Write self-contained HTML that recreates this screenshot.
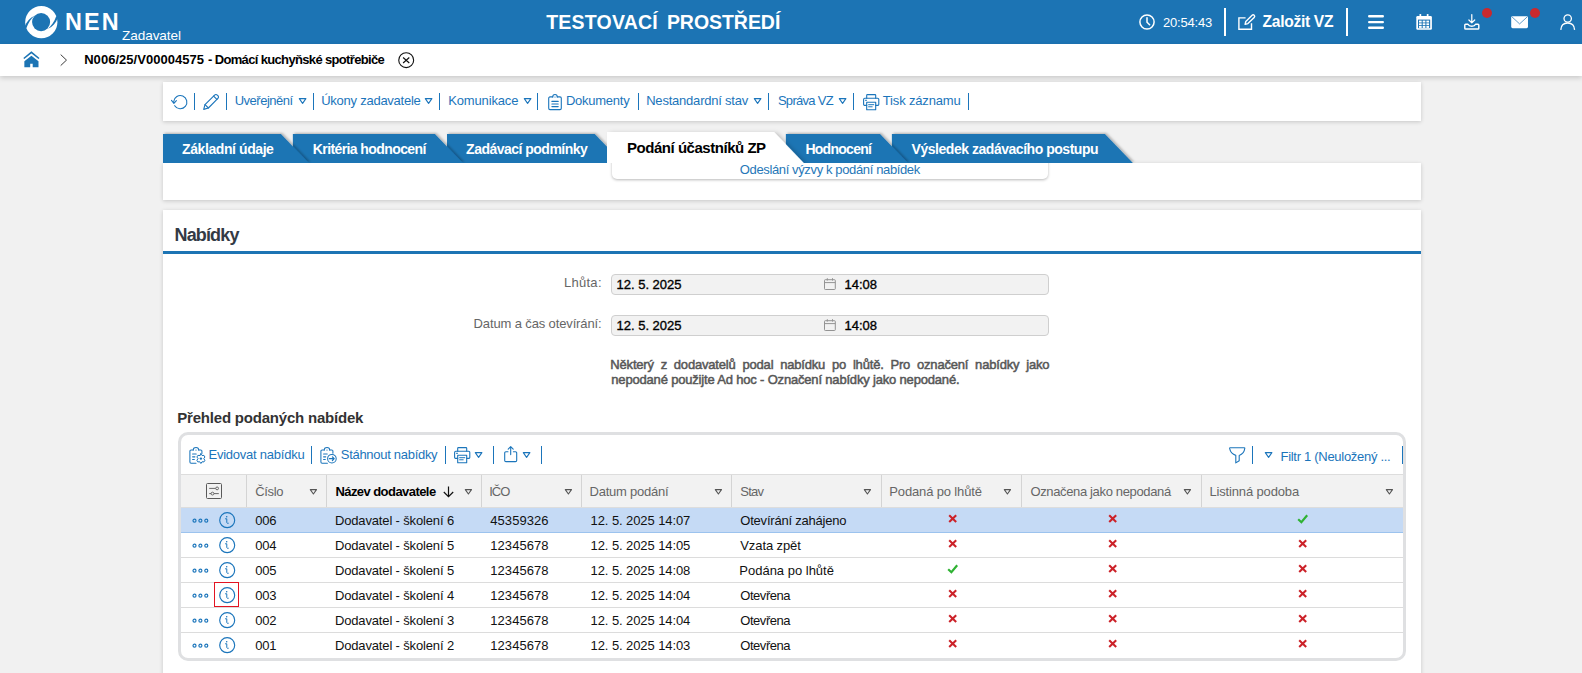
<!DOCTYPE html>
<html lang="cs"><head><meta charset="utf-8"><title>NEN - Nabídky</title>
<style>
*{box-sizing:border-box;margin:0;padding:0}
html,body{width:1582px;height:673px;overflow:hidden}
body{position:relative;background:#f1f1f1;font-family:"Liberation Sans", Arial, sans-serif;font-size:13px}
.t{position:absolute;white-space:pre;line-height:20px;height:20px}
.i{position:absolute;overflow:visible;display:block}
.sep,.csep,.dot,.redbox{position:absolute;display:block}
.top{position:absolute;left:0;top:0;width:1582px;height:44px;background:#1c74b4}
.crumb{position:absolute;left:0;top:44px;width:1582px;height:32px;background:#fff;box-shadow:0 2px 5px rgba(0,0,0,.17)}
.top .t,.top .i,.top .sep,.top .dot{position:absolute}
.crumb .t,.crumb .i{margin-top:-44px}
.dot{width:10.300px;height:10.300px;border-radius:50%;background:#c9292e}
.panel{position:absolute;background:#fff;box-shadow:0 1px 4px rgba(0,0,0,.18)}
.subpanel{position:absolute;background:#fff;border-radius:0 0 5px 5px;box-shadow:0 1px 3px rgba(0,0,0,.28)}
.inp{position:absolute;background:#f2f2f2;border:1px solid #cfcfcf;border-radius:4px}
.grid{position:absolute;border:3px solid #dfe0e2;border-radius:10px;background:#fff}
.hrow{position:absolute;background:#f2f2f2;border-top:1px solid #ddd;border-bottom:1px solid #ddd}
.csep{width:1px;background:#d4d4d4}
.selrow{position:absolute;background:#c5daf5;border-bottom:1px solid #9cc3ee}
.rline{position:absolute;height:1px;background:#dcdcdc}
.redbox{border:1px solid #e31422}
</style></head>
<body>
<header class="top">
<svg class="i" style="left:24.6px;top:5.8px" width="33" height="33" viewBox="0 0 33 33" ><circle cx="16.3" cy="16.2" r="16.1" fill="#fff"/><circle cx="16.1" cy="16.100" r="9.050" fill="#1c74b4"/><path d="M-0.3 20.6C1.700 15.300 5 11.600 9.600 9.700C6.200 12.500 3.500 16.200 1.300 22.300Z" fill="#1c74b4"/><g transform="rotate(180 16.3 16.2)"><path d="M-0.3 20.6C1.700 15.300 5 11.600 9.600 9.700C6.200 12.500 3.500 16.200 1.300 22.300Z" fill="#1c74b4"/></g></svg>
<span class="t logo" style="left:65.10px;top:12.00px;font-size:23.4px;font-weight:700;color:#fff;letter-spacing:2.103px;">NEN</span>
<span class="t" style="left:122.00px;top:26.00px;font-size:13.6px;font-weight:400;color:#fff;letter-spacing:-0.085px;">Zadavatel</span>
<span class="t" style="left:546.20px;top:12.00px;font-size:19.5px;font-weight:700;color:#fff;letter-spacing:0.216px;">TESTOVACÍ</span>
<span class="t" style="left:666.90px;top:12.00px;font-size:19.5px;font-weight:700;color:#fff;letter-spacing:-0.043px;">PROSTŘEDÍ</span>
<svg class="i" style="left:1138.6px;top:13.9px" width="16" height="16" viewBox="0 0 16 16" ><circle cx="8" cy="8" r="7.100" fill="none" stroke="#fff" stroke-width="1.500"/><path d="M8 3.800V8.200l2.600 2.600" fill="none" stroke="#fff" stroke-width="1.500" stroke-linecap="round"/></svg>
<span class="t" style="left:1162.90px;top:13.00px;font-size:13px;font-weight:400;color:#fff;letter-spacing:-0.168px;">20:54:43</span>
<i class="sep" style="left:1224.00px;top:8px;height:28.4px;width:2px;background:#fff"></i>
<svg class="i" style="left:1238px;top:13.8px" width="17" height="16.5" viewBox="0 0 17 16.5" ><g fill="none" stroke="#fff" stroke-width="1.400" stroke-linejoin="miter" stroke-linecap="butt"><path d="M7.600 3.900H0.900V15.200H13.500V9.200"/><path d="M7.100 10.400l0.700-2.900 6.300-6.200a1.450 1.450 0 0 1 2.100 2.100L9.900 9.600z" stroke-linejoin="round"/></g></svg>
<span class="t" style="left:1262.60px;top:12.00px;font-size:15.6px;font-weight:700;color:#fff;letter-spacing:-0.312px;">Založit VZ</span>
<i class="sep" style="left:1346.00px;top:8px;height:28.4px;width:2px;background:#fff"></i>
<svg class="i" style="left:1368px;top:14px" width="16" height="16" viewBox="0 0 16 16" ><path d="M1.200 2.200h13.600M1.200 8.100h13.600M1.200 13.800h13.600" stroke="#fff" stroke-width="2.400" stroke-linecap="round"/></svg>
<svg class="i" style="left:1415.8px;top:14px" width="16.2" height="16" viewBox="0 0 16.2 16" ><rect x="0.300" y="2" width="15.600" height="13.800" rx="1.200" fill="#fff"/><rect x="3.500" y="0" width="1.700" height="3.600" rx="0.500" fill="#fff"/><rect x="10.800" y="0" width="1.700" height="3.600" rx="0.500" fill="#fff"/><rect x="2" y="5.600" width="12.200" height="8.600" fill="#1c74b4"/><g fill="#fff"><rect x="3" y="6.600" width="2.700" height="1.900"/><rect x="6.700" y="6.600" width="2.700" height="1.900"/><rect x="10.400" y="6.600" width="2.700" height="1.900"/><rect x="3" y="9.300" width="2.700" height="1.900"/><rect x="6.700" y="9.300" width="2.700" height="1.900"/><rect x="10.400" y="9.300" width="2.700" height="1.900"/><rect x="3" y="12" width="2.700" height="1.900"/><rect x="6.700" y="12" width="2.700" height="1.900"/><rect x="10.400" y="12" width="2.700" height="1.900"/></g></svg>
<svg class="i" style="left:1464px;top:14px" width="15.6" height="16" viewBox="0 0 15.6 16" ><g fill="none" stroke="#fff" stroke-linejoin="round" stroke-linecap="round"><path d="M7.800 0.600v8.200M4.900 6l2.900 2.900L10.700 6" stroke-width="1.250"/><path d="M4 10.200H1.600a0.800 0.800 0 0 0-0.800 0.800v3.300a0.800 0.800 0 0 0 0.800 0.800h12.400a0.800 0.800 0 0 0 0.800-0.800V11a0.800 0.800 0 0 0-0.800-0.800H11.600c-0.600 1.300-1.900 2-3.800 2s-3.200-0.700-3.800-2z" stroke-width="1.450"/></g></svg>
<i class="dot" style="left:1481.9px;top:7.900px"></i>
<svg class="i" style="left:1511px;top:15.8px" width="17.2" height="12.4" viewBox="0 0 17.2 12.4" ><rect x="0.200" y="0.200" width="16.800" height="12" rx="1.400" fill="#fff"/><path d="M1 0.900l7.600 7L16.200 0.900" fill="none" stroke="#1c74b4" stroke-width="0.700"/></svg>
<i class="dot" style="left:1529.8px;top:7.900px"></i>
<svg class="i" style="left:1560px;top:13.9px" width="15.4" height="16.2" viewBox="0 0 15.4 16.2" ><g fill="none" stroke="#fff" stroke-width="1.300"><circle cx="7.700" cy="4.500" r="3.700"/><path d="M0.800 15.900c0.200-4.600 2.900-6.900 6.900-6.900s6.700 2.300 6.900 6.900"/></g></svg>
</header>
<nav class="crumb">
<svg class="i" style="left:22.7px;top:52.4px" width="16.8" height="15.6" viewBox="0 0 16.8 15.6" ><path d="M0.800 6.500L8.400 0.300L16 6.500" fill="none" stroke="#1c74b4" stroke-width="1.600"/><path d="M8.400 3.700L1.350 9.300V15.200H7.200V11.800H9.700V15.200H15.500V9.300z" fill="#1c74b4"/></svg>
<svg class="i" style="left:60.4px;top:54.3px" width="7.4" height="12.2" viewBox="0 0 7.4 12.2" ><path d="M0.700 0.600l5.800 5.500L0.700 11.600" fill="none" stroke="#3a3a3a" stroke-width="1"/></svg>
<span class="t" style="left:84.20px;top:50.00px;font-size:13px;font-weight:700;color:#000;letter-spacing:0.035px;">N006/25/V00004575</span>
<span class="t" style="left:208.00px;top:50.00px;font-size:13px;font-weight:700;color:#000;letter-spacing:-0.651px;">- Domácí kuchyňské spotřebiče</span>
<svg class="i" style="left:397.6px;top:51.8px" width="16.4" height="16.4" viewBox="0 0 16.4 16.4" ><circle cx="8.200" cy="8.200" r="7.450" fill="none" stroke="#111" stroke-width="1.100"/><path d="M5.100 5.500l6.200 5.500M11.300 5.500l-6.200 5.500" stroke="#111" stroke-width="1.150" fill="none"/></svg>
</nav>
<main>
<div class="actions" role="toolbar">
<div class="panel toolbar" style="left:163px;top:82px;width:1258px;height:39px"></div>
<svg class="i" style="left:170.6px;top:94.2px" width="17" height="16" viewBox="0 0 17 16" ><path d="M3.7 11.7A6.6 6.6 0 1 0 2.7 7.6" fill="none" stroke="#1b75bb" stroke-width="1.1" stroke-linecap="round"/><path d="M0.5 6.4L2.9 9.3L5.4 6.600" fill="none" stroke="#1b75bb" stroke-width="1.1" stroke-linecap="round" stroke-linejoin="round"/></svg>
<i class="sep" style="left:193.75px;top:93px;height:17.0px;width:1.3px;background:#1b75bb"></i>
<svg class="i" style="left:203px;top:93.5px" width="16.5" height="16.5" viewBox="0 0 16.5 16.5" ><g fill="none" stroke="#1b75bb" stroke-width="1.1" stroke-linejoin="round" stroke-linecap="round"><path d="M0.7 15.4L2 10.6L11.6 1.1a1.9 1.9 0 0 1 2.7 0l0.6 0.6a1.9 1.9 0 0 1 0 2.7L5.4 14z"/><path d="M2 10.6L5.4 14M10.6 2.1L13.9 5.4"/></g></svg>
<i class="sep" style="left:225.75px;top:93px;height:17.0px;width:1.3px;background:#1b75bb"></i>
<span class="t" style="left:234.70px;top:91.00px;font-size:13px;font-weight:400;color:#1b75bb;letter-spacing:-0.495px;">Uveřejnění</span>
<svg class="i" style="left:298px;top:97px" width="9.2" height="7.8" viewBox="0 0 9.2 7.8" ><path d="M1.3 1.6H7.9L4.6 6.3999999999999995Z" fill="none" stroke="#1b75bb" stroke-width="1.1" stroke-linejoin="round"/></svg>
<i class="sep" style="left:312.75px;top:93px;height:17.0px;width:1.3px;background:#1b75bb"></i>
<span class="t" style="left:321.20px;top:91.00px;font-size:13px;font-weight:400;color:#1b75bb;letter-spacing:-0.247px;">Úkony zadavatele</span>
<svg class="i" style="left:424.4px;top:97px" width="9.2" height="7.8" viewBox="0 0 9.2 7.8" ><path d="M1.3 1.6H7.9L4.6 6.3999999999999995Z" fill="none" stroke="#1b75bb" stroke-width="1.1" stroke-linejoin="round"/></svg>
<i class="sep" style="left:438.95px;top:93px;height:17.0px;width:1.3px;background:#1b75bb"></i>
<span class="t" style="left:448.20px;top:91.00px;font-size:13px;font-weight:400;color:#1b75bb;letter-spacing:-0.145px;">Komunikace</span>
<svg class="i" style="left:522.6px;top:97px" width="9.2" height="7.8" viewBox="0 0 9.2 7.8" ><path d="M1.3 1.6H7.9L4.6 6.3999999999999995Z" fill="none" stroke="#1b75bb" stroke-width="1.1" stroke-linejoin="round"/></svg>
<i class="sep" style="left:536.75px;top:93px;height:17.0px;width:1.3px;background:#1b75bb"></i>
<svg class="i" style="left:547.6px;top:93.6px" width="14" height="16.4" viewBox="0 0 14 16.4" ><g fill="none" stroke="#1b75bb" stroke-width="1.1" stroke-linejoin="round" stroke-linecap="round"><path d="M4.700 2.900H2a1.300 1.300 0 0 0-1.300 1.300v10.100A1.300 1.300 0 0 0 2 15.600h10a1.300 1.300 0 0 0 1.300-1.300V4.200A1.300 1.300 0 0 0 12 2.900H9.300"/><path d="M4.700 2.900C4.700 1.300 5.600 0.500 7 0.500s2.300 0.800 2.300 2.400"/><path d="M3.900 7.4h6.300M3.900 10h6.300M3.900 12.6h6.300" stroke-width="1.150"/></g><circle cx="7" cy="3" r="0.6" fill="#1b75bb"/></svg>
<span class="t" style="left:565.90px;top:91.00px;font-size:13px;font-weight:400;color:#1b75bb;letter-spacing:-0.244px;">Dokumenty</span>
<i class="sep" style="left:637.95px;top:93px;height:17.0px;width:1.3px;background:#1b75bb"></i>
<span class="t" style="left:646.20px;top:91.00px;font-size:13px;font-weight:400;color:#1b75bb;letter-spacing:-0.213px;">Nestandardní stav</span>
<svg class="i" style="left:753.2px;top:97px" width="9.2" height="7.8" viewBox="0 0 9.2 7.8" ><path d="M1.3 1.6H7.9L4.6 6.3999999999999995Z" fill="none" stroke="#1b75bb" stroke-width="1.1" stroke-linejoin="round"/></svg>
<i class="sep" style="left:767.95px;top:93px;height:17.0px;width:1.3px;background:#1b75bb"></i>
<span class="t" style="left:777.90px;top:91.00px;font-size:13px;font-weight:400;color:#1b75bb;letter-spacing:-0.697px;">Správa VZ</span>
<svg class="i" style="left:838.1px;top:97px" width="9.2" height="7.8" viewBox="0 0 9.2 7.8" ><path d="M1.3 1.6H7.9L4.6 6.3999999999999995Z" fill="none" stroke="#1b75bb" stroke-width="1.1" stroke-linejoin="round"/></svg>
<i class="sep" style="left:852.75px;top:93px;height:17.0px;width:1.3px;background:#1b75bb"></i>
<svg class="i" style="left:862.5px;top:93.7px" width="16.4" height="16.4" viewBox="0 0 16.4 16.4" ><g fill="none" stroke="#1b75bb" stroke-width="1.1" stroke-linejoin="round" stroke-linecap="round"><path d="M3.7 4.2V1.3a0.7 0.7 0 0 1 0.7-0.7h7.6a0.7 0.7 0 0 1 0.7 0.7v2.9"/><path d="M3.7 11.4H1.8a1.2 1.2 0 0 1-1.2-1.2V5.4a1.2 1.2 0 0 1 1.2-1.2h12.8a1.2 1.2 0 0 1 1.2 1.2v4.8a1.2 1.2 0 0 1-1.2 1.2h-1.9"/><path d="M3.7 8.3h9v7.4h-9z"/><path d="M5.6 10.7h5.2M5.6 12.8h3.6" stroke-width="1"/><path d="M2.5 6.3h1" /></g></svg>
<span class="t" style="left:882.80px;top:91.00px;font-size:13px;font-weight:400;color:#1b75bb;letter-spacing:-0.162px;">Tisk záznamu</span>
<i class="sep" style="left:967.95px;top:93px;height:17.0px;width:1.3px;background:#1b75bb"></i>
</div>
<div class="tabs" role="tablist">
<div class="panel" style="left:163px;top:163px;width:1258px;height:37px"></div>
<div class="subpanel" style="left:611.5px;top:150px;width:436.6px;height:29px"></div>
<span class="t" style="left:739.80px;top:160.00px;font-size:13px;font-weight:400;color:#2677b8;letter-spacing:-0.370px;">Odeslání výzvy k podání nabídek</span>
<svg class="i" style="left:0;top:120px" width="1582" height="50" viewBox="0 120 1582 50"><defs><filter id="ts" x="-5%" y="-30%" width="110%" height="160%"><feDropShadow dx="1.500" dy="-1" stdDeviation="1.300" flood-color="#000" flood-opacity="0.260"/></filter><filter id="ta" x="-5%" y="-30%" width="110%" height="160%"><feDropShadow dx="3" dy="1" stdDeviation="2" flood-color="#000" flood-opacity="0.220"/></filter><clipPath id="tc"><rect x="0" y="120" width="1582" height="43"/></clipPath></defs><g clip-path="url(#tc)"><polygon points="891.9,163 891.9,134 1104.9,134 1132.9,163" fill="#1c74b4" filter="url(#ts)"/><polygon points="785.9,163 785.9,134 880.0,134 908.0,163" fill="#1c74b4" filter="url(#ts)"/><polygon points="447,163 447,134 594.7,134 622.7,163" fill="#1c74b4" filter="url(#ts)"/><polygon points="292.9,163 292.9,134 434.9,134 462.9,163" fill="#1c74b4" filter="url(#ts)"/><polygon points="163,163 163,134 280.9,134 308.9,163" fill="#1c74b4" filter="url(#ts)"/><polygon points="607,163 607,132 774.05,132 803.8499999999999,163" fill="#fff" filter="url(#ta)"/></g></svg>
<span class="t" style="left:182.10px;top:139.00px;font-size:14px;font-weight:700;color:#fff;letter-spacing:-0.420px;">Základní údaje</span>
<span class="t" style="left:312.80px;top:139.00px;font-size:14px;font-weight:700;color:#fff;letter-spacing:-0.594px;">Kritéria hodnocení</span>
<span class="t" style="left:466.10px;top:139.00px;font-size:14px;font-weight:700;color:#fff;letter-spacing:-0.515px;">Zadávací podmínky</span>
<span class="t" style="left:805.40px;top:139.00px;font-size:14px;font-weight:700;color:#fff;letter-spacing:-0.718px;">Hodnocení</span>
<span class="t" style="left:911.60px;top:139.00px;font-size:14px;font-weight:700;color:#fff;letter-spacing:-0.470px;">Výsledek zadávacího postupu</span>
<span class="t" style="left:627.00px;top:138.00px;font-size:15px;font-weight:700;color:#000;letter-spacing:-0.468px;">Podání účastníků ZP</span>
</div>
<div class="offers">
<section class="panel" style="left:163px;top:210px;width:1258px;height:480px"></section>
<span class="t" style="left:174.50px;top:225.00px;font-size:18px;font-weight:700;color:#333a45;letter-spacing:-0.852px;">Nabídky</span>
<div style="position:absolute;left:163px;top:251px;width:1258px;height:3px;background:#1c74b4"></div>
<span class="t" style="left:563.90px;top:273.00px;font-size:13px;font-weight:400;color:#666;letter-spacing:0.294px;">Lhůta:</span>
<div class="inp" style="left:611px;top:274px;width:438px;height:21px"></div>
<span class="t" style="left:616.50px;top:275.00px;font-size:13px;font-weight:500;color:#000;-webkit-text-stroke:0.35px currentColor;letter-spacing:-0.003px;">12. 5. 2025</span>
<svg class="i" style="left:823.7px;top:278.2px" width="12" height="12" viewBox="0 0 12 12" ><g fill="none" stroke="#939393" stroke-width="1"><rect x="0.500" y="1.700" width="10.800" height="9.800" rx="0.800"/><path d="M0.500 4.600h10.800M3.300 0.200v2.400M8.500 0.200v2.400"/></g></svg>
<span class="t" style="left:844.60px;top:275.00px;font-size:13px;font-weight:500;color:#000;-webkit-text-stroke:0.35px currentColor;letter-spacing:-0.050px;">14:08</span>
<span class="t" style="left:473.60px;top:314.00px;font-size:13px;font-weight:400;color:#666;letter-spacing:-0.132px;">Datum a čas otevírání:</span>
<div class="inp" style="left:611px;top:315px;width:438px;height:21px"></div>
<span class="t" style="left:616.50px;top:316.00px;font-size:13px;font-weight:500;color:#000;-webkit-text-stroke:0.35px currentColor;letter-spacing:-0.003px;">12. 5. 2025</span>
<svg class="i" style="left:823.7px;top:319.2px" width="12" height="12" viewBox="0 0 12 12" ><g fill="none" stroke="#939393" stroke-width="1"><rect x="0.500" y="1.700" width="10.800" height="9.800" rx="0.800"/><path d="M0.500 4.600h10.800M3.300 0.200v2.400M8.500 0.200v2.400"/></g></svg>
<span class="t" style="left:844.60px;top:316.00px;font-size:13px;font-weight:500;color:#000;-webkit-text-stroke:0.35px currentColor;letter-spacing:-0.050px;">14:08</span>
<span class="t" style="left:610.30px;top:355.00px;font-size:13px;font-weight:500;color:#575757;-webkit-text-stroke:0.5px currentColor;letter-spacing:-0.179px;word-spacing:3.385px;">Některý z dodavatelů podal nabídku po lhůtě. Pro označení nabídky jako</span>
<span class="t note2" style="left:611.30px;top:370.00px;font-size:13px;font-weight:500;color:#575757;-webkit-text-stroke:0.5px currentColor;letter-spacing:-0.179px;">nepodané použijte Ad hoc - Označení nabídky jako nepodané.</span>
<span class="t" style="left:177.30px;top:408.00px;font-size:15px;font-weight:700;color:#333;letter-spacing:-0.206px;">Přehled podaných nabídek</span>
<div class="offers-grid" role="table">
<div class="grid" style="left:178px;top:432px;width:1228px;height:229px"></div>
<svg class="i" style="left:188.5px;top:446.5px" width="17" height="17" viewBox="0 0 17 17" ><g fill="none" stroke="#1b75bb" stroke-width="1.05" stroke-linejoin="round" stroke-linecap="round"><path d="M4.300 2.900H2.100a1.200 1.200 0 0 0-1.200 1.200V15a1.200 1.200 0 0 0 1.200 1.200H7"/><path d="M9.700 2.900h2a1.200 1.200 0 0 1 1.200 1.200v2.300"/><path d="M4.300 2.900C4.300 1.200 5.400 0.400 7 0.400s2.700 0.800 2.700 2.500"/><path d="M3.600 7h3.600M3.600 9.800h2.300M3.600 12.500h1.700" stroke-width="1.150"/><path d="M11.900 6.800l1.100 1.700 2-0.100 0.900 1.600-1.100 1.600 1.100 1.700-0.900 1.600-2-0.100-1.100 1.700-1.100-1.700-2 0.100-0.900-1.600 1.100-1.700-1.100-1.600 0.900-1.600 2 0.100z" stroke-width="1"/></g><circle cx="11.900" cy="11.600" r="1.200" fill="#1b75bb"/><circle cx="7" cy="3.100" r="0.600" fill="#1b75bb"/></svg>
<span class="t" style="left:208.50px;top:445.00px;font-size:13px;font-weight:400;color:#1b75bb;letter-spacing:-0.234px;">Evidovat nabídku</span>
<i class="sep" style="left:310.85px;top:446px;height:18.0px;width:1.3px;background:#1b75bb"></i>
<svg class="i" style="left:320.4px;top:446.5px" width="17" height="17" viewBox="0 0 17 17" ><g fill="none" stroke="#1b75bb" stroke-width="1.05" stroke-linejoin="round" stroke-linecap="round"><path d="M4.300 2.900H2.100a1.200 1.200 0 0 0-1.200 1.200V15a1.200 1.200 0 0 0 1.200 1.200H7.400"/><path d="M9.700 2.900h2a1.200 1.200 0 0 1 1.200 1.200v2.200"/><path d="M4.300 2.900C4.300 1.200 5.400 0.400 7 0.400s2.700 0.800 2.700 2.500"/><path d="M3.600 7h3.600M3.600 9.800h2.100M3.600 12.500h1.700" stroke-width="1.150"/><circle cx="11.900" cy="11.700" r="4.300"/><path d="M9.400 11.700h4.600M12.400 9.900l1.800 1.800-1.800 1.800" stroke-width="1.200"/></g><circle cx="7" cy="3.100" r="0.600" fill="#1b75bb"/></svg>
<span class="t" style="left:340.80px;top:445.00px;font-size:13px;font-weight:400;color:#1b75bb;letter-spacing:-0.293px;">Stáhnout nabídky</span>
<i class="sep" style="left:444.95px;top:446px;height:18.0px;width:1.3px;background:#1b75bb"></i>
<svg class="i" style="left:454.1px;top:446.7px" width="16.4" height="16.4" viewBox="0 0 16.4 16.4" ><g fill="none" stroke="#1b75bb" stroke-width="1.1" stroke-linejoin="round" stroke-linecap="round"><path d="M3.7 4.2V1.3a0.7 0.7 0 0 1 0.7-0.7h7.6a0.7 0.7 0 0 1 0.7 0.7v2.9"/><path d="M3.7 11.4H1.8a1.2 1.2 0 0 1-1.2-1.2V5.4a1.2 1.2 0 0 1 1.2-1.2h12.8a1.2 1.2 0 0 1 1.2 1.2v4.8a1.2 1.2 0 0 1-1.2 1.2h-1.9"/><path d="M3.7 8.3h9v7.4h-9z"/><path d="M5.6 10.7h5.2M5.6 12.8h3.6" stroke-width="1"/><path d="M2.5 6.3h1" /></g></svg>
<svg class="i" style="left:473.6px;top:451.3px" width="9.2" height="7.8" viewBox="0 0 9.2 7.8" ><path d="M1.3 1.6H7.9L4.6 6.3999999999999995Z" fill="none" stroke="#1b75bb" stroke-width="1.1" stroke-linejoin="round"/></svg>
<i class="sep" style="left:492.85px;top:446px;height:18.0px;width:1.3px;background:#1b75bb"></i>
<svg class="i" style="left:503.8px;top:446.4px" width="13.4" height="16.4" viewBox="0 0 13.4 16.4" ><g fill="none" stroke="#1b75bb" stroke-width="1.1" stroke-linejoin="round" stroke-linecap="round"><path d="M4 5.8H1.9a1.2 1.2 0 0 0-1.2 1.2v7.4a1.2 1.2 0 0 0 1.2 1.2h9.6a1.2 1.2 0 0 0 1.2-1.2V7a1.2 1.2 0 0 0-1.2-1.2H9.4"/><path d="M6.7 8.6V0.8M4.2 3.2L6.7 0.7L9.2 3.2"/></g></svg>
<svg class="i" style="left:521.6px;top:451.3px" width="9.2" height="7.8" viewBox="0 0 9.2 7.8" ><path d="M1.3 1.6H7.9L4.6 6.3999999999999995Z" fill="none" stroke="#1b75bb" stroke-width="1.1" stroke-linejoin="round"/></svg>
<i class="sep" style="left:540.95px;top:446px;height:18.0px;width:1.3px;background:#1b75bb"></i>
<svg class="i" style="left:1228.8px;top:446.6px" width="16.5" height="16.6" viewBox="0 0 16.5 16.6" ><path d="M1.2 0.7h14a0.6 0.6 0 0 1 0.6 0.7c-0.5 3.6-2.6 6-5.6 7v5.3l-3.4 2.2V8.4C3.600 7.400 1.300 5 0.600 1.400a0.600 0.600 0 0 1 0.600-0.700z" fill="none" stroke="#1b75bb" stroke-width="1.1" stroke-linejoin="round"/></svg>
<i class="sep" style="left:1251.85px;top:446px;height:18.0px;width:1.3px;background:#1b75bb"></i>
<svg class="i" style="left:1264.4px;top:451.2px" width="9.2" height="7.8" viewBox="0 0 9.2 7.8" ><path d="M1.3 1.6H7.9L4.6 6.3999999999999995Z" fill="none" stroke="#1b75bb" stroke-width="1.1" stroke-linejoin="round"/></svg>
<span class="t" style="left:1280.50px;top:447.00px;font-size:13px;font-weight:400;color:#1b75bb;letter-spacing:-0.291px;">Filtr 1 (Neuložený ...</span>
<i class="sep" style="left:1401.75px;top:446px;height:18.0px;width:1.3px;background:#1b75bb"></i>
<div class="hrow" style="left:181px;top:474px;width:1222px;height:34px"></div>
<i class="csep" style="left:246px;top:475px;height:32px"></i>
<i class="csep" style="left:326px;top:475px;height:32px"></i>
<i class="csep" style="left:481px;top:475px;height:32px"></i>
<i class="csep" style="left:581px;top:475px;height:32px"></i>
<i class="csep" style="left:731px;top:475px;height:32px"></i>
<i class="csep" style="left:881px;top:475px;height:32px"></i>
<i class="csep" style="left:1021px;top:475px;height:32px"></i>
<i class="csep" style="left:1201px;top:475px;height:32px"></i>
<svg class="i" style="left:206px;top:483px" width="16" height="16" viewBox="0 0 16 16" ><g fill="none" stroke="#5a5a5a" stroke-width="1"><rect x="0.5" y="0.5" width="15" height="15" rx="1"/><path d="M3.2 5.4h6.6M3.2 10.600h1.900M8 10.600h4.800" stroke-width="0.9"/><circle cx="11.100" cy="5.400" r="1.400" fill="#f2f2f2" stroke-width="0.9"/><circle cx="6.500" cy="10.600" r="1.400" fill="#f2f2f2" stroke-width="0.9"/></g></svg>
<span class="t" style="left:255.30px;top:482.00px;font-size:13px;font-weight:400;color:#666;letter-spacing:-0.372px;">Číslo</span>
<svg class="i" style="left:308.8px;top:487.7px" width="8.8" height="7.4" viewBox="0 0 8.8 7.4" ><path d="M1.3 1.6H7.5L4.4 6.0Z" fill="none" stroke="#555" stroke-width="1.1" stroke-linejoin="round"/></svg>
<span class="t" style="left:335.40px;top:482.00px;font-size:13px;font-weight:700;color:#000;letter-spacing:-0.558px;">Název dodavatele</span>
<svg class="i" style="left:463.6px;top:487.7px" width="8.8" height="7.4" viewBox="0 0 8.8 7.4" ><path d="M1.3 1.6H7.5L4.4 6.0Z" fill="none" stroke="#555" stroke-width="1.1" stroke-linejoin="round"/></svg>
<span class="t" style="left:489.30px;top:482.00px;font-size:13px;font-weight:400;color:#666;letter-spacing:-1.050px;">IČO</span>
<svg class="i" style="left:563.6px;top:487.7px" width="8.8" height="7.4" viewBox="0 0 8.8 7.4" ><path d="M1.3 1.6H7.5L4.4 6.0Z" fill="none" stroke="#555" stroke-width="1.1" stroke-linejoin="round"/></svg>
<span class="t" style="left:589.60px;top:482.00px;font-size:13px;font-weight:400;color:#666;letter-spacing:-0.241px;">Datum podání</span>
<svg class="i" style="left:713.8px;top:487.7px" width="8.8" height="7.4" viewBox="0 0 8.8 7.4" ><path d="M1.3 1.6H7.5L4.4 6.0Z" fill="none" stroke="#555" stroke-width="1.1" stroke-linejoin="round"/></svg>
<span class="t" style="left:740.30px;top:482.00px;font-size:13px;font-weight:400;color:#666;letter-spacing:-0.738px;">Stav</span>
<svg class="i" style="left:863.3px;top:487.7px" width="8.8" height="7.4" viewBox="0 0 8.8 7.4" ><path d="M1.3 1.6H7.5L4.4 6.0Z" fill="none" stroke="#555" stroke-width="1.1" stroke-linejoin="round"/></svg>
<span class="t" style="left:889.30px;top:482.00px;font-size:13px;font-weight:400;color:#666;letter-spacing:-0.147px;">Podaná po lhůtě</span>
<svg class="i" style="left:1003.4px;top:487.7px" width="8.8" height="7.4" viewBox="0 0 8.8 7.4" ><path d="M1.3 1.6H7.5L4.4 6.0Z" fill="none" stroke="#555" stroke-width="1.1" stroke-linejoin="round"/></svg>
<span class="t" style="left:1030.40px;top:482.00px;font-size:13px;font-weight:400;color:#666;letter-spacing:-0.354px;">Označena jako nepodaná</span>
<svg class="i" style="left:1183.4px;top:487.7px" width="8.8" height="7.4" viewBox="0 0 8.8 7.4" ><path d="M1.3 1.6H7.5L4.4 6.0Z" fill="none" stroke="#555" stroke-width="1.1" stroke-linejoin="round"/></svg>
<span class="t" style="left:1209.40px;top:482.00px;font-size:13px;font-weight:400;color:#666;letter-spacing:-0.148px;">Listinná podoba</span>
<svg class="i" style="left:1384.7px;top:487.7px" width="8.8" height="7.4" viewBox="0 0 8.8 7.4" ><path d="M1.3 1.6H7.5L4.4 6.0Z" fill="none" stroke="#555" stroke-width="1.1" stroke-linejoin="round"/></svg>
<svg class="i" style="left:443px;top:485.6px" width="11" height="11.6" viewBox="0 0 11 11.6" ><path d="M5.5 0.500v10M0.800 6l4.700 4.700L10.200 6" fill="none" stroke="#111" stroke-width="1.2"/></svg>
<div class="selrow" style="left:181px;top:508px;width:1222px;height:25px"></div>
<svg class="i" style="left:192.0px;top:517.5px" width="16.8" height="5.4" viewBox="0 0 16.8 5.4" ><g fill="none" stroke="#1b75bb" stroke-width="1.2"><circle cx="2.5" cy="2.7" r="1.5"/><circle cx="8.4" cy="2.7" r="1.5"/><circle cx="14.3" cy="2.7" r="1.5"/></g></svg>
<svg class="i" style="left:218.9px;top:511.8px" width="16.4" height="16.4" viewBox="0 0 16.4 16.4" ><circle cx="8.2" cy="8.2" r="7.5" fill="none" stroke="#1b75bb" stroke-width="1.15"/><circle cx="7.7" cy="4.75" r="0.75" fill="#1b75bb"/><path d="M6.5 6.8h1.3v3.600c0 0.800 0.500 1.100 1.500 0.900" fill="none" stroke="#1b75bb" stroke-width="1" stroke-linecap="round" stroke-linejoin="round"/></svg>
<span class="t" style="left:255.30px;top:511.00px;font-size:13px;font-weight:400;color:#111;letter-spacing:-0.280px;">006</span>
<span class="t" style="left:334.90px;top:511.00px;font-size:13px;font-weight:400;color:#111;letter-spacing:-0.145px;">Dodavatel - školení 6</span>
<span class="t" style="left:490.30px;top:511.00px;font-size:13px;font-weight:400;color:#111;letter-spacing:0.056px;">45359326</span>
<span class="t" style="left:590.60px;top:511.00px;font-size:13px;font-weight:400;color:#111;letter-spacing:-0.092px;">12. 5. 2025 14:07</span>
<span class="t" style="left:740.30px;top:511.00px;font-size:13px;font-weight:400;color:#111;letter-spacing:-0.213px;">Otevírání zahájeno</span>
<svg class="i" style="left:947.9px;top:514.3px" width="9.4" height="9.2" viewBox="0 0 9.4 9.2" ><path d="M1.2 1.2l7 6.800M8.200 1.200l-7 6.800" stroke="#cc2229" stroke-width="2.1" fill="none"/></svg>
<svg class="i" style="left:1107.8px;top:514.3px" width="9.4" height="9.2" viewBox="0 0 9.4 9.2" ><path d="M1.2 1.2l7 6.800M8.200 1.200l-7 6.800" stroke="#cc2229" stroke-width="2.1" fill="none"/></svg>
<svg class="i" style="left:1297.0px;top:513.8000000000001px" width="11.4" height="9.6" viewBox="0 0 11.4 9.6" ><path d="M1.2 5.200l3.200 3 5.800-6.900" stroke="#2fb233" stroke-width="2.2" fill="none"/></svg>
<div class="rline" style="left:181px;top:557px;width:1222px"></div>
<svg class="i" style="left:192.0px;top:542.5px" width="16.8" height="5.4" viewBox="0 0 16.8 5.4" ><g fill="none" stroke="#1b75bb" stroke-width="1.2"><circle cx="2.5" cy="2.7" r="1.5"/><circle cx="8.4" cy="2.7" r="1.5"/><circle cx="14.3" cy="2.7" r="1.5"/></g></svg>
<svg class="i" style="left:218.9px;top:536.8px" width="16.4" height="16.4" viewBox="0 0 16.4 16.4" ><circle cx="8.2" cy="8.2" r="7.5" fill="none" stroke="#1b75bb" stroke-width="1.15"/><circle cx="7.7" cy="4.75" r="0.75" fill="#1b75bb"/><path d="M6.5 6.8h1.3v3.600c0 0.800 0.500 1.100 1.500 0.900" fill="none" stroke="#1b75bb" stroke-width="1" stroke-linecap="round" stroke-linejoin="round"/></svg>
<span class="t" style="left:255.30px;top:536.00px;font-size:13px;font-weight:400;color:#111;letter-spacing:-0.280px;">004</span>
<span class="t" style="left:334.90px;top:536.00px;font-size:13px;font-weight:400;color:#111;letter-spacing:-0.145px;">Dodavatel - školení 5</span>
<span class="t" style="left:490.30px;top:536.00px;font-size:13px;font-weight:400;color:#111;letter-spacing:0.056px;">12345678</span>
<span class="t" style="left:590.60px;top:536.00px;font-size:13px;font-weight:400;color:#111;letter-spacing:-0.092px;">12. 5. 2025 14:05</span>
<span class="t" style="left:740.30px;top:536.00px;font-size:13px;font-weight:400;color:#111;letter-spacing:-0.102px;">Vzata zpět</span>
<svg class="i" style="left:947.9px;top:539.3px" width="9.4" height="9.2" viewBox="0 0 9.4 9.2" ><path d="M1.2 1.2l7 6.800M8.200 1.200l-7 6.800" stroke="#cc2229" stroke-width="2.1" fill="none"/></svg>
<svg class="i" style="left:1107.8px;top:539.3px" width="9.4" height="9.2" viewBox="0 0 9.4 9.2" ><path d="M1.2 1.2l7 6.800M8.200 1.200l-7 6.800" stroke="#cc2229" stroke-width="2.1" fill="none"/></svg>
<svg class="i" style="left:1297.8999999999999px;top:539.3px" width="9.4" height="9.2" viewBox="0 0 9.4 9.2" ><path d="M1.2 1.2l7 6.800M8.200 1.200l-7 6.800" stroke="#cc2229" stroke-width="2.1" fill="none"/></svg>
<div class="rline" style="left:181px;top:582px;width:1222px"></div>
<svg class="i" style="left:192.0px;top:567.5px" width="16.8" height="5.4" viewBox="0 0 16.8 5.4" ><g fill="none" stroke="#1b75bb" stroke-width="1.2"><circle cx="2.5" cy="2.7" r="1.5"/><circle cx="8.4" cy="2.7" r="1.5"/><circle cx="14.3" cy="2.7" r="1.5"/></g></svg>
<svg class="i" style="left:218.9px;top:561.8px" width="16.4" height="16.4" viewBox="0 0 16.4 16.4" ><circle cx="8.2" cy="8.2" r="7.5" fill="none" stroke="#1b75bb" stroke-width="1.15"/><circle cx="7.7" cy="4.75" r="0.75" fill="#1b75bb"/><path d="M6.5 6.8h1.3v3.600c0 0.800 0.500 1.100 1.500 0.900" fill="none" stroke="#1b75bb" stroke-width="1" stroke-linecap="round" stroke-linejoin="round"/></svg>
<span class="t" style="left:255.30px;top:561.00px;font-size:13px;font-weight:400;color:#111;letter-spacing:-0.280px;">005</span>
<span class="t" style="left:334.90px;top:561.00px;font-size:13px;font-weight:400;color:#111;letter-spacing:-0.145px;">Dodavatel - školení 5</span>
<span class="t" style="left:490.30px;top:561.00px;font-size:13px;font-weight:400;color:#111;letter-spacing:0.056px;">12345678</span>
<span class="t" style="left:590.60px;top:561.00px;font-size:13px;font-weight:400;color:#111;letter-spacing:-0.092px;">12. 5. 2025 14:08</span>
<span class="t" style="left:739.30px;top:561.00px;font-size:13px;font-weight:400;color:#111;letter-spacing:-0.005px;">Podána po lhůtě</span>
<svg class="i" style="left:947.0px;top:563.8000000000001px" width="11.4" height="9.6" viewBox="0 0 11.4 9.6" ><path d="M1.2 5.200l3.200 3 5.800-6.900" stroke="#2fb233" stroke-width="2.2" fill="none"/></svg>
<svg class="i" style="left:1107.8px;top:564.3px" width="9.4" height="9.2" viewBox="0 0 9.4 9.2" ><path d="M1.2 1.2l7 6.800M8.200 1.200l-7 6.800" stroke="#cc2229" stroke-width="2.1" fill="none"/></svg>
<svg class="i" style="left:1297.8999999999999px;top:564.3px" width="9.4" height="9.2" viewBox="0 0 9.4 9.2" ><path d="M1.2 1.2l7 6.800M8.200 1.200l-7 6.800" stroke="#cc2229" stroke-width="2.1" fill="none"/></svg>
<div class="rline" style="left:181px;top:607px;width:1222px"></div>
<svg class="i" style="left:192.0px;top:592.5px" width="16.8" height="5.4" viewBox="0 0 16.8 5.4" ><g fill="none" stroke="#1b75bb" stroke-width="1.2"><circle cx="2.5" cy="2.7" r="1.5"/><circle cx="8.4" cy="2.7" r="1.5"/><circle cx="14.3" cy="2.7" r="1.5"/></g></svg>
<svg class="i" style="left:218.9px;top:586.8px" width="16.4" height="16.4" viewBox="0 0 16.4 16.4" ><circle cx="8.2" cy="8.2" r="7.5" fill="none" stroke="#1b75bb" stroke-width="1.15"/><circle cx="7.7" cy="4.75" r="0.75" fill="#1b75bb"/><path d="M6.5 6.8h1.3v3.600c0 0.800 0.500 1.100 1.500 0.900" fill="none" stroke="#1b75bb" stroke-width="1" stroke-linecap="round" stroke-linejoin="round"/></svg>
<span class="t" style="left:255.30px;top:586.00px;font-size:13px;font-weight:400;color:#111;letter-spacing:-0.280px;">003</span>
<span class="t" style="left:334.90px;top:586.00px;font-size:13px;font-weight:400;color:#111;letter-spacing:-0.145px;">Dodavatel - školení 4</span>
<span class="t" style="left:490.30px;top:586.00px;font-size:13px;font-weight:400;color:#111;letter-spacing:0.056px;">12345678</span>
<span class="t" style="left:590.60px;top:586.00px;font-size:13px;font-weight:400;color:#111;letter-spacing:-0.092px;">12. 5. 2025 14:04</span>
<span class="t" style="left:740.30px;top:586.00px;font-size:13px;font-weight:400;color:#111;letter-spacing:-0.463px;">Otevřena</span>
<svg class="i" style="left:947.9px;top:589.3px" width="9.4" height="9.2" viewBox="0 0 9.4 9.2" ><path d="M1.2 1.2l7 6.800M8.200 1.200l-7 6.800" stroke="#cc2229" stroke-width="2.1" fill="none"/></svg>
<svg class="i" style="left:1107.8px;top:589.3px" width="9.4" height="9.2" viewBox="0 0 9.4 9.2" ><path d="M1.2 1.2l7 6.800M8.200 1.200l-7 6.800" stroke="#cc2229" stroke-width="2.1" fill="none"/></svg>
<svg class="i" style="left:1297.8999999999999px;top:589.3px" width="9.4" height="9.2" viewBox="0 0 9.4 9.2" ><path d="M1.2 1.2l7 6.800M8.200 1.200l-7 6.800" stroke="#cc2229" stroke-width="2.1" fill="none"/></svg>
<div class="rline" style="left:181px;top:632px;width:1222px"></div>
<svg class="i" style="left:192.0px;top:617.5px" width="16.8" height="5.4" viewBox="0 0 16.8 5.4" ><g fill="none" stroke="#1b75bb" stroke-width="1.2"><circle cx="2.5" cy="2.7" r="1.5"/><circle cx="8.4" cy="2.7" r="1.5"/><circle cx="14.3" cy="2.7" r="1.5"/></g></svg>
<svg class="i" style="left:218.9px;top:611.8px" width="16.4" height="16.4" viewBox="0 0 16.4 16.4" ><circle cx="8.2" cy="8.2" r="7.5" fill="none" stroke="#1b75bb" stroke-width="1.15"/><circle cx="7.7" cy="4.75" r="0.75" fill="#1b75bb"/><path d="M6.5 6.8h1.3v3.600c0 0.800 0.500 1.100 1.500 0.900" fill="none" stroke="#1b75bb" stroke-width="1" stroke-linecap="round" stroke-linejoin="round"/></svg>
<span class="t" style="left:255.30px;top:611.00px;font-size:13px;font-weight:400;color:#111;letter-spacing:-0.280px;">002</span>
<span class="t" style="left:334.90px;top:611.00px;font-size:13px;font-weight:400;color:#111;letter-spacing:-0.145px;">Dodavatel - školení 3</span>
<span class="t" style="left:490.30px;top:611.00px;font-size:13px;font-weight:400;color:#111;letter-spacing:0.056px;">12345678</span>
<span class="t" style="left:590.60px;top:611.00px;font-size:13px;font-weight:400;color:#111;letter-spacing:-0.092px;">12. 5. 2025 14:04</span>
<span class="t" style="left:740.30px;top:611.00px;font-size:13px;font-weight:400;color:#111;letter-spacing:-0.463px;">Otevřena</span>
<svg class="i" style="left:947.9px;top:614.3px" width="9.4" height="9.2" viewBox="0 0 9.4 9.2" ><path d="M1.2 1.2l7 6.800M8.200 1.200l-7 6.800" stroke="#cc2229" stroke-width="2.1" fill="none"/></svg>
<svg class="i" style="left:1107.8px;top:614.3px" width="9.4" height="9.2" viewBox="0 0 9.4 9.2" ><path d="M1.2 1.2l7 6.800M8.200 1.200l-7 6.800" stroke="#cc2229" stroke-width="2.1" fill="none"/></svg>
<svg class="i" style="left:1297.8999999999999px;top:614.3px" width="9.4" height="9.2" viewBox="0 0 9.4 9.2" ><path d="M1.2 1.2l7 6.800M8.200 1.200l-7 6.800" stroke="#cc2229" stroke-width="2.1" fill="none"/></svg>
<svg class="i" style="left:192.0px;top:642.5px" width="16.8" height="5.4" viewBox="0 0 16.8 5.4" ><g fill="none" stroke="#1b75bb" stroke-width="1.2"><circle cx="2.5" cy="2.7" r="1.5"/><circle cx="8.4" cy="2.7" r="1.5"/><circle cx="14.3" cy="2.7" r="1.5"/></g></svg>
<svg class="i" style="left:218.9px;top:636.8px" width="16.4" height="16.4" viewBox="0 0 16.4 16.4" ><circle cx="8.2" cy="8.2" r="7.5" fill="none" stroke="#1b75bb" stroke-width="1.15"/><circle cx="7.7" cy="4.75" r="0.75" fill="#1b75bb"/><path d="M6.5 6.8h1.3v3.600c0 0.800 0.500 1.100 1.500 0.900" fill="none" stroke="#1b75bb" stroke-width="1" stroke-linecap="round" stroke-linejoin="round"/></svg>
<span class="t" style="left:255.30px;top:636.00px;font-size:13px;font-weight:400;color:#111;letter-spacing:-0.280px;">001</span>
<span class="t" style="left:334.90px;top:636.00px;font-size:13px;font-weight:400;color:#111;letter-spacing:-0.145px;">Dodavatel - školení 2</span>
<span class="t" style="left:490.30px;top:636.00px;font-size:13px;font-weight:400;color:#111;letter-spacing:0.056px;">12345678</span>
<span class="t" style="left:590.60px;top:636.00px;font-size:13px;font-weight:400;color:#111;letter-spacing:-0.092px;">12. 5. 2025 14:03</span>
<span class="t" style="left:740.30px;top:636.00px;font-size:13px;font-weight:400;color:#111;letter-spacing:-0.463px;">Otevřena</span>
<svg class="i" style="left:947.9px;top:639.3px" width="9.4" height="9.2" viewBox="0 0 9.4 9.2" ><path d="M1.2 1.2l7 6.800M8.200 1.200l-7 6.800" stroke="#cc2229" stroke-width="2.1" fill="none"/></svg>
<svg class="i" style="left:1107.8px;top:639.3px" width="9.4" height="9.2" viewBox="0 0 9.4 9.2" ><path d="M1.2 1.2l7 6.800M8.200 1.200l-7 6.800" stroke="#cc2229" stroke-width="2.1" fill="none"/></svg>
<svg class="i" style="left:1297.8999999999999px;top:639.3px" width="9.4" height="9.2" viewBox="0 0 9.4 9.2" ><path d="M1.2 1.2l7 6.800M8.200 1.200l-7 6.800" stroke="#cc2229" stroke-width="2.1" fill="none"/></svg>
<i class="redbox" style="left:214px;top:582px;width:25px;height:25px"></i>
</div>
</div>
</main>
</body></html>
